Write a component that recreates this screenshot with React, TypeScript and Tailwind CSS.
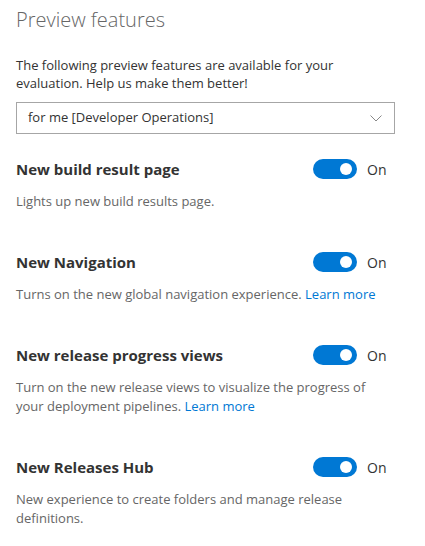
import React from 'react';

type Feature = {
  title: string;
  desc: string;
  link?: boolean;
};

const features: Feature[] = [
  { title: 'New build result page', desc: 'Lights up new build results page.' },
  { title: 'New Navigation', desc: 'Turns on the new global navigation experience.', link: true },
  {
    title: 'New release progress views',
    desc: 'Turn on the new release views to visualize the progress of your deployment pipelines.',
    link: true,
  },
  { title: 'New Releases Hub', desc: 'New experience to create folders and manage release definitions.' },
];

function Toggle() {
  return (
    <div className="flex w-[82px] items-center gap-[10px]">
      <div className="flex h-[20px] w-[44px] items-center justify-end rounded-full bg-[#0078d4] pr-[5px]">
        <div className="h-[12px] w-[12px] rounded-full bg-white" />
      </div>
      <span className="text-[14px] text-[#333]">On</span>
    </div>
  );
}

function FeatureRow({ feature }: { feature: Feature }) {
  return (
    <div className="mb-[41px] w-[379px]">
      <div className="flex h-[20px] items-center">
        <h3 className="flex-1 text-[15px] font-bold text-[#333]">{feature.title}</h3>
        <Toggle />
      </div>
      <p className="mt-[13px] text-[13px] leading-[19px] text-[#666]">
        {feature.desc}
        {feature.link ? (
          <>
            {' '}
            <a href="#" className="text-[#0078d4]">
              Learn more
            </a>
          </>
        ) : null}
      </p>
    </div>
  );
}

export default function App() {
  return (
    <div
      className="min-h-screen bg-white px-[16px] pt-[6px]"
      style={{ fontFamily: '"Open Sans", "Noto Sans", sans-serif' }}
    >
      <h1 className="text-[20px] font-light leading-[28px] text-[#666]">Preview features</h1>
      <p className="mt-[22px] w-[340px] text-[13px] leading-[18px] text-[#333]">
        The following preview features are available for your evaluation. Help us make them better!
      </p>
      <div className="mt-[10px] flex h-[32px] w-[379px] items-center justify-between border border-[#a6a6a6] pl-[11px] pr-[12px]">
        <span className="text-[13px] text-[#333]">for me [Developer Operations]</span>
        <svg width="12" height="7" viewBox="0 0 12 7" fill="none">
          <path d="M0.5 0.5L6 6L11.5 0.5" stroke="#888" strokeWidth="1" />
        </svg>
      </div>
      <div className="mt-[25px]">
        {features.map((f) => (
          <FeatureRow key={f.title} feature={f} />
        ))}
      </div>
    </div>
  );
}
